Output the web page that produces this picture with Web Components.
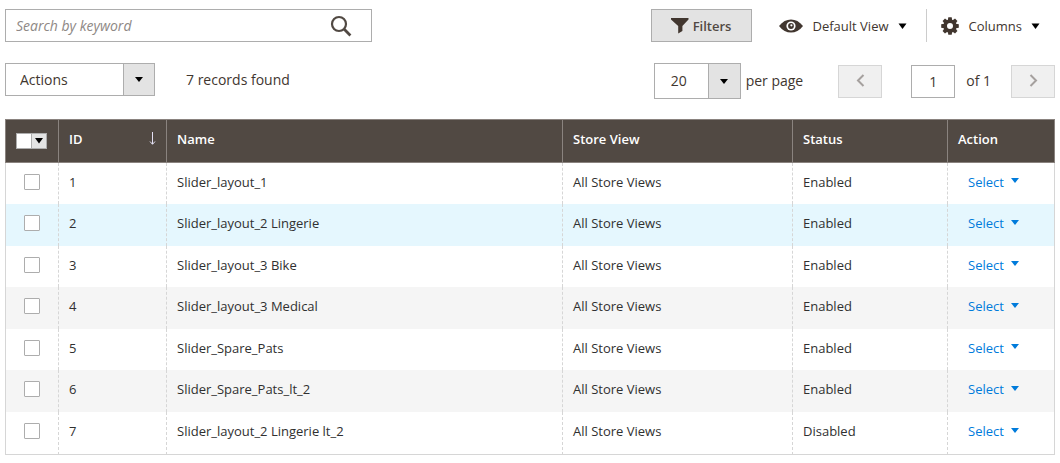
<!DOCTYPE html>
<html lang="en">
<head>
<meta charset="utf-8">
<title>Sliders</title>
<style>
  body {
    margin: 9px 5px 8px;
    background: #fff;
    color: #41362f;
    font-family: "Open Sans", "Noto Sans", sans-serif;
    font-size: 14px;
    line-height: 20px;
  }
</style>
</head>
<body>
<grid-page></grid-page>

<script>
const BASE = `
  *, *::before, *::after { box-sizing: border-box; }
  button, input, select { font: inherit; color: inherit; margin: 0; border-radius: 0; }
  button { background: none; border: 0; padding: 0; cursor: pointer; }
  svg { display: block; flex: none; }
`;

class BaseElement extends HTMLElement {
  constructor() {
    super();
    this.attachShadow({ mode: 'open' });
  }
  connectedCallback() {
    this.shadowRoot.innerHTML = `<style>${BASE}${this.styles()}</style>${this.markup()}`;
  }
}

customElements.define('grid-search', class extends BaseElement {
  styles() { return `
    :host { display: block; flex: 0 1 367px; min-width: 160px; }
    form { display: flex; align-items: center; height: 33px; border: 1px solid #adadad; background: #fff; }
    input { flex: 1; min-width: 0; height: 31px; border: 0; outline: 0; padding: 0 10px; background: none; }
    input::placeholder { color: #8e8885; opacity: 1; font-style: italic; }
    button { margin-right: 19px; }
  `; }
  markup() { return `
    <form role="search" onsubmit="return false">
      <input type="text" aria-label="Keyword" placeholder="Search by keyword">
      <button type="submit" aria-label="Search">
        <svg width="22" height="22" viewBox="0 0 22 22" fill="none" stroke="#514943">
          <circle cx="9" cy="9" r="7" stroke-width="2.2"/>
          <path d="M14 14l6.400 6.400" stroke-width="2.800"/>
        </svg>
      </button>
    </form>`; }
});

customElements.define('filter-button', class extends BaseElement {
  styles() { return `
    :host { display: block; }
    button { display: flex; align-items: center; justify-content: center; gap: 4px; width: 101px; height: 33px;
      background: #e3e3e3; border: 1px solid #adadad; color: #514943; font-size: 13px; font-weight: 600; }
  `; }
  markup() { return `
    <button type="button">
      <svg width="18" height="16" viewBox="0 0 18 16" fill="#41362f"><path d="M0 0h17.5v1.5L11.4 8v5L7.2 15.6V8L0 1.5z"/></svg>
      <slot></slot>
    </button>`; }
});

customElements.define('menu-button', class extends BaseElement {
  styles() { return `
    :host { display: block; }
    button { display: flex; align-items: center; height: 33px; font-size: 13px; white-space: nowrap; }
    .caret { margin-left: 9px; }
  `; }
  markup() { return `
    <button type="button" aria-haspopup="true">
      <slot name="icon"></slot><slot></slot>
      <svg class="caret" width="9" height="6" viewBox="0 0 9 6"><path d="M.5 .5h8L4.5 6z" fill="#000"/></svg>
    </button>`; }
});

customElements.define('drop-select', class extends BaseElement {
  styles() {
    const narrow = this.hasAttribute('narrow');
    return `
    :host { display: block; }
    .box { display: grid; grid-template-columns: 1fr ${narrow ? 32 : 31}px; width: ${narrow ? 87 : 150}px; height: ${narrow ? 36 : 33}px; border: 1px solid #adadad; }
    select { grid-area: 1 / 1 / 2 / 3; appearance: none; border: 0; background: #fff; width: 100%; height: 100%; padding: 0 32px 0 ${narrow ? 16 : 14}px; }
    .arrow { grid-area: 1 / 2 / 2 / 3; z-index: 1; pointer-events: none; display: flex; align-items: center; justify-content: center;
      background: #e3e3e3; border-left: 1px solid #adadad; }
  `; }
  markup() { return `
    <div class="box">
      <select aria-label="${this.getAttribute('label')}"><option>${this.getAttribute('value')}</option></select>
      <span class="arrow"><svg width="8" height="5" viewBox="0 0 8 5"><path d="M0 0h8L4 5z" fill="#000"/></svg></span>
    </div>`; }
});

customElements.define('grid-pager', class extends BaseElement {
  styles() { return `
    :host { display: flex; align-items: center; white-space: nowrap; }
    .per { margin: 0 35px 0 5px; }
    .step { display: flex; align-items: center; justify-content: center; width: 44px; height: 33px; padding-bottom: 2px; background: #f0f0f0; border: 1px solid #d6d6d6; }
    input { width: 44px; height: 33px; border: 1px solid #adadad; background: #fff; text-align: center; padding: 0; margin: 0 11px 0 29px; }
    .total { margin-right: 20px; }
  `; }
  markup() { return `
    <drop-select narrow label="Rows per page" value="20"></drop-select>
    <span class="per">per page</span>
    <button class="step" type="button" disabled aria-label="Previous page">
      <svg width="9" height="13" viewBox="0 0 9 13" fill="none" stroke="#a5a09e" stroke-width="2"><path d="M7.500 1L2 6.500 7.500 12"/></svg>
    </button>
    <input id="page" type="text" value="1">
    <label class="total" for="page">of 1</label>
    <button class="step" type="button" disabled aria-label="Next page">
      <svg width="9" height="13" viewBox="0 0 9 13" fill="none" stroke="#a5a09e" stroke-width="2"><path d="M1.500 1L7 6.500 1.500 12"/></svg>
    </button>`; }
});

const ROWS = [
  [1, 'Slider_layout_1', 'Enabled'],
  [2, 'Slider_layout_2 Lingerie', 'Enabled'],
  [3, 'Slider_layout_3 Bike', 'Enabled'],
  [4, 'Slider_layout_3 Medical', 'Enabled'],
  [5, 'Slider_Spare_Pats', 'Enabled'],
  [6, 'Slider_Spare_Pats_lt_2', 'Enabled'],
  [7, 'Slider_layout_2 Lingerie lt_2', 'Disabled'],
];

customElements.define('data-grid', class extends BaseElement {
  styles() { return `
    :host { display: block; font-size: 13px; line-height: 18px; }
    table { width: 100%; table-layout: fixed; border-spacing: 0; color: #303030; }
    .pick { width: 53px; } .id { width: 108px; } .store { width: 230px; } .status { width: 155px; } .act { width: 108px; }
    th { height: 44px; padding: 0 10px 5px; background: #514943; color: #fff; font-weight: 600; text-align: left;
      border: solid #8a837f; border-width: 1px 0 1px 1px; }
    th:last-child { border-right-width: 1px; }
    td { height: 41px; padding: 0 10px 4px; border-left: 1px dashed #d6d6d6; }
    tr:nth-child(even) td { height: 42px; background: #f5f5f5; }
    tbody tr:hover td, tr.active:nth-child(even) td { background: #e5f7fe; }
    td:first-child { border-left-style: solid; }
    td:last-child { border-right: 1px solid #d6d6d6; padding-left: 20px; }
    tbody tr:last-child td { height: 43px; border-bottom: 1px solid #d6d6d6; }
    td:first-child, th:first-child { padding-left: 0; padding-right: 0; }
    th:first-child { padding-bottom: 0; }
    input { display: block; appearance: none; width: 16px; height: 16px; margin: 0 auto; border: 1px solid #adadad; border-radius: 1px; background: #fff; }
    .multi { display: flex; width: 31px; height: 16px; margin-left: 10px; border: 1px solid #adadad; }
    .multi input { width: 14px; height: 14px; margin: 0; border: 0; border-radius: 0; }
    .multi button { flex: 1; display: flex; align-items: center; justify-content: center; background: #e3e3e3; border-left: 1px solid #adadad; }
    .sort { display: flex; align-items: center; justify-content: space-between; width: 100%; text-align: left; }
    .select { display: flex; align-items: center; gap: 7px; color: #007bdb; }
    .select svg { margin-bottom: 2px; }
  `; }
  markup() {
    const rows = ROWS.map(([id, name, status]) => `
      <tr${id === 2 ? ' class="active"' : ''}>
        <td><input type="checkbox" aria-label="Select row ${id}"></td>
        <td>${id}</td><td>${name}</td><td>All Store Views</td><td>${status}</td>
        <td><button class="select" type="button" aria-haspopup="true">Select
          <svg width="8" height="5" viewBox="0 0 8 5"><path d="M0 0h8L4 5z" fill="#007bdb"/></svg></button></td>
      </tr>`).join('');
    return `
    <table>
      <colgroup><col class="pick"><col class="id"><col><col class="store"><col class="status"><col class="act"></colgroup>
      <thead><tr>
        <th scope="col"><div class="multi"><input type="checkbox" aria-label="Select all"><button type="button" aria-label="Selection options">
          <svg width="8" height="6" viewBox="0 0 8 6"><path d="M0 0h8L4 5.5z" fill="#000"/></svg></button></div></th>
        <th scope="col" aria-sort="descending"><button class="sort" type="button">ID
          <svg width="7" height="13" viewBox="0 0 7 13" fill="none" stroke="#e4e0f4"><path d="M3.5 0v12M1 9.500l2.500 2.800L6 9.500"/></svg></button></th>
        <th scope="col">Name</th><th scope="col">Store View</th><th scope="col">Status</th><th scope="col">Action</th>
      </tr></thead>
      <tbody>${rows}</tbody>
    </table>`;
  }
});

customElements.define('grid-page', class extends BaseElement {
  styles() { return `
    :host { display: block; }
    .bar { display: flex; align-items: center; }
    .tools { display: flex; align-items: center; margin-left: auto; }
    .view { margin: 0 19px 0 27px; }
    .columns { padding: 0 15px 0 14px; border-left: 1px solid #ccc; }
    .eye, .gear { margin-right: 10px; }
    .second { align-items: flex-start; margin: 21px 0 20px; }
    .count { margin-left: 31px; line-height: 33px; }
    grid-pager { margin-left: auto; }
  `; }
  markup() {
    let teeth = '';
    for (let a = 0; a < 360; a += 45) teeth += `<path d="M7.3.2h3.4l.7 4H6.6z" transform="rotate(${a} 9 9)"/>`;
    return `
    <div class="bar">
      <grid-search></grid-search>
      <div class="tools">
        <filter-button>Filters</filter-button>
        <menu-button class="view">
          <svg slot="icon" class="eye" width="24" height="14" viewBox="0 0 24 14">
            <path d="M0 7C3.5 2.4 7.5.4 12 .4S20.5 2.4 24 7c-3.5 4.6-7.5 6.6-12 6.6S3.5 11.6 0 7z" fill="#41362f"/>
            <circle cx="12" cy="7" r="4.6" fill="#fff"/><circle cx="12" cy="7" r="2.9" fill="#41362f"/><circle cx="12.4" cy="6.3" r="1.1" fill="#fff"/>
          </svg>Default View</menu-button>
        <menu-button class="columns">
          <svg slot="icon" class="gear" width="18" height="18" viewBox="0 0 18 18" fill="#41362f">
            <circle cx="9" cy="9" r="4.8" fill="none" stroke="#41362f" stroke-width="3.6"/>${teeth}
          </svg>Columns</menu-button>
      </div>
    </div>
    <div class="bar second">
      <drop-select label="Actions" value="Actions"></drop-select>
      <span class="count">7 records found</span>
      <grid-pager></grid-pager>
    </div>
    <data-grid></data-grid>`;
  }
});
</script>
</body>
</html>
